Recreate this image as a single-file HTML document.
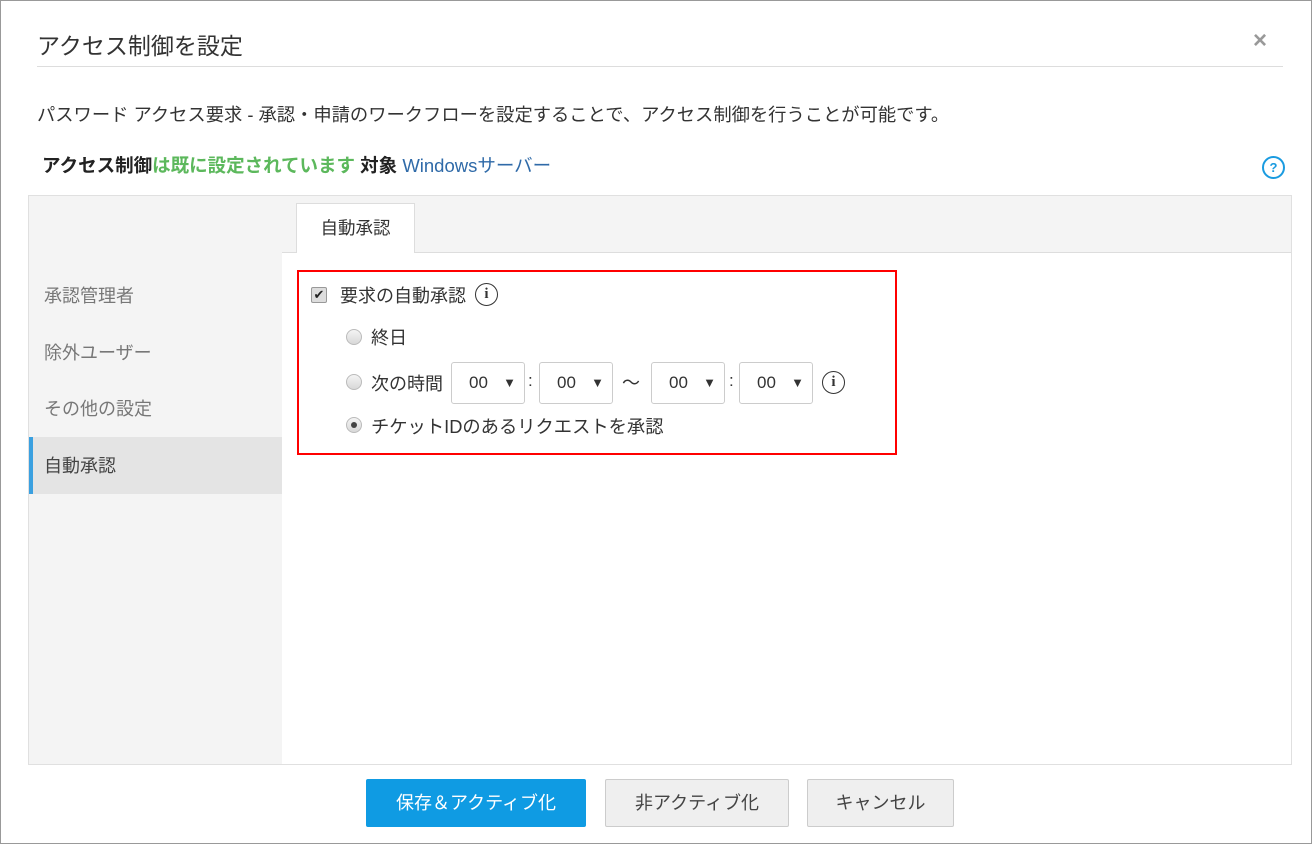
<!DOCTYPE html>
<html><head><meta charset="utf-8"><style>
*{box-sizing:border-box;margin:0;padding:0}
body{width:1314px;height:845px;background:#fff;font-family:"Liberation Sans","Noto Sans CJK JP",sans-serif;color:#333;position:relative;overflow:hidden}
.frame{position:absolute;left:0;top:0;width:1312px;height:844px;border:1px solid #999}
.abs{position:absolute;white-space:nowrap}
.sel{position:absolute;top:362px;height:42px;width:74px;border:1px solid #ccc;border-radius:3px;background:#fff;font-size:17px;line-height:40px;padding-left:17px}
.sel:after{content:"▼";position:absolute;right:8px;top:0;font-size:13px}
.radio{position:absolute;width:16px;height:16px;border-radius:50%;border:1px solid #bbb;background:linear-gradient(#f4f4f4,#d8d8d8)}
.btn{position:absolute;top:779px;height:48px;border:1px solid #ccc;border-radius:2px;background:#efefef;font-size:18px;line-height:46px;text-align:center;color:#444}
</style></head><body>
<div class="frame"></div>
<div class="abs" style="left:37px;top:27px;font-size:23px;color:#333">アクセス制御を設定</div>
<div class="abs" style="left:1253px;top:27px;font-size:24px;color:#999;font-weight:bold">×</div>
<div class="abs" style="left:37px;top:66px;width:1246px;height:1px;background:#ddd"></div>
<div class="abs" style="left:37px;top:101px;font-size:18.3px;color:#333">パスワード アクセス要求 - 承認・申請のワークフローを設定することで、アクセス制御を行うことが可能です。</div>
<div class="abs" style="left:42px;top:152px;font-size:18.5px;font-weight:bold;color:#222">アクセス制御<span style="color:#5cb85c">は既に設定されています</span> 対象 <span style="color:#2f6aa8;font-weight:normal">Windowsサーバー</span></div>
<div class="abs" style="left:1262px;top:156px;width:23px;height:23px;border:2px solid #1a9be0;border-radius:50%;color:#1a9be0;font-size:13px;font-weight:bold;text-align:center;line-height:19px">?</div>

<div class="abs" style="left:28px;top:195px;width:1264px;height:570px;border:1px solid #e0e0e0;background:#f4f4f4"></div>
<div class="abs" style="left:282px;top:252px;width:1009px;height:512px;background:#fff"></div>
<div class="abs" style="left:282px;top:252px;width:1009px;height:1px;background:#ddd"></div>
<div class="abs" style="left:296px;top:203px;width:119px;height:50px;background:#fff;border:1px solid #ddd;border-bottom:none;font-size:17.5px;text-align:center;line-height:48px">自動承認</div>

<div class="abs" style="left:44px;top:282px;font-size:18px;color:#777">承認管理者</div>
<div class="abs" style="left:44px;top:339px;font-size:18px;color:#777">除外ユーザー</div>
<div class="abs" style="left:44px;top:395px;font-size:18px;color:#777">その他の設定</div>
<div class="abs" style="left:29px;top:437px;width:253px;height:57px;background:#e4e4e4;border-left:4px solid #3aa0e0"></div>
<div class="abs" style="left:44px;top:452px;font-size:18px;color:#444">自動承認</div>

<div class="abs" style="left:297px;top:270px;width:600px;height:185px;border:2px solid #f00"></div>
<div class="abs" style="left:311px;top:287px;width:16px;height:16px;border:1px solid #999;border-radius:2px;background:#ddd;font-size:13px;line-height:14px;text-align:center;color:#222">✔</div>
<div class="abs" style="left:340px;top:282px;font-size:18px">要求の自動承認</div>
<div class="abs" style="left:475px;top:283px;width:23px;height:23px;border:1.5px solid #333;border-radius:50%;font-family:'Liberation Serif',serif;font-size:15px;text-align:center;line-height:20px;font-weight:bold">i</div>
<div class="radio" style="left:346px;top:329px"></div>
<div class="abs" style="left:371px;top:324px;font-size:18px">終日</div>
<div class="radio" style="left:346px;top:374px"></div>
<div class="abs" style="left:371px;top:370px;font-size:18px">次の時間</div>
<div class="sel" style="left:451px">00</div>
<div class="abs" style="left:528px;top:371px;font-size:17px">:</div>
<div class="sel" style="left:539px">00</div>
<div class="abs" style="left:622px;top:369px;font-size:18px">～</div>
<div class="sel" style="left:651px">00</div>
<div class="abs" style="left:729px;top:371px;font-size:17px">:</div>
<div class="sel" style="left:739px">00</div>
<div class="abs" style="left:822px;top:371px;width:23px;height:23px;border:1.5px solid #333;border-radius:50%;font-family:'Liberation Serif',serif;font-size:15px;text-align:center;line-height:20px;font-weight:bold">i</div>
<div class="radio" style="left:346px;top:417px"><div style="position:absolute;left:4px;top:4px;width:6px;height:6px;border-radius:50%;background:#444"></div></div>
<div class="abs" style="left:371px;top:413px;font-size:18.3px">チケットIDのあるリクエストを承認</div>

<div class="btn" style="left:366px;width:220px;background:#0f9be3;border-color:#0f9be3;color:#fff">保存＆アクティブ化</div>
<div class="btn" style="left:605px;width:184px">非アクティブ化</div>
<div class="btn" style="left:807px;width:147px">キャンセル</div>
</body></html>
